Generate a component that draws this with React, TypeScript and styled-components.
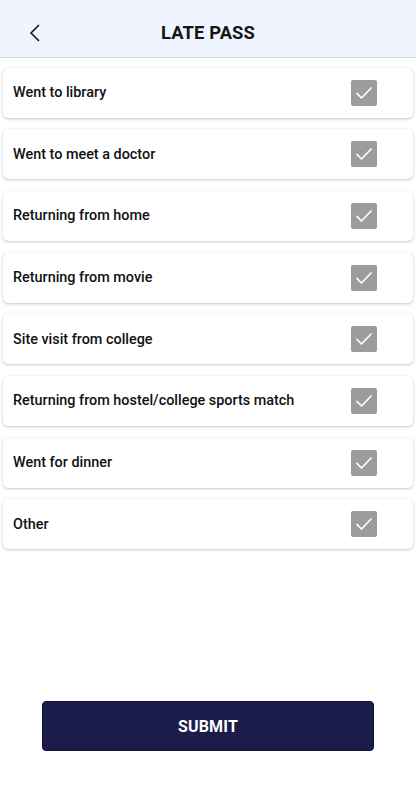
import React, { useState } from 'react';
import styled, { createGlobalStyle } from 'styled-components';

const GlobalStyle = createGlobalStyle`
  html, body {
    margin: 0;
    padding: 0;
    background: #ffffff;
  }
  body {
    font-family: Roboto, 'Liberation Sans', sans-serif;
    color: #111;
  }
`;

const Page = styled.div`
  display: flex;
  flex-direction: column;
  min-height: 800px;
  width: 416px;
  background: #fff;
`;

const Header = styled.header`
  height: 58px;
  box-sizing: border-box;
  padding-top: 7px;
  background-color: #eff4fe;
  border-bottom: 1px solid #d6d8dc;
  display: flex;
  align-items: center;
  position: relative;
  justify-content: center;
`;

const BackButton = styled.button`
  position: absolute;
  left: 24px;
  top: 21px;
  width: 24px;
  height: 24px;
  padding: 0;
  border: none;
  background: none;
  display: flex;
  align-items: center;
  justify-content: center;
`;

const Title = styled.h1`
  margin: 0;
  font-size: 18.4px;
  font-weight: 700;
  letter-spacing: 0.1px;
  color: #151515;
`;

const List = styled.div`
  display: flex;
  flex-direction: column;
  gap: 11.7px;
  padding: 9.5px 3px 0;
`;

const Card = styled.label`
  height: 50px;
  background: #fff;
  border-radius: 5px;
  box-shadow: 0 1px 3px rgba(0, 0, 0, 0.22), 0 0 1px rgba(0, 0, 0, 0.08);
  display: flex;
  align-items: center;
  justify-content: space-between;
  padding: 0 36px 0 10px;
  cursor: pointer;
`;

const Label = styled.span`
  font-size: 14.4px;
  font-weight: 500;
  color: #111;
`;

const Box = styled.span<{ $checked: boolean }>`
  width: 26px;
  height: 26px;
  border-radius: 2px;
  background: ${({ $checked }) => ($checked ? '#9c9c9c' : '#fff')};
  border: ${({ $checked }) => ($checked ? 'none' : '2px solid #9c9c9c')};
  box-sizing: border-box;
  display: flex;
  align-items: center;
  justify-content: center;
`;

const Spacer = styled.div`
  flex: 1;
`;

const SubmitButton = styled.button`
  align-self: center;
  width: 332px;
  height: 50px;
  margin: 0 0 49px 0;
  background-color: #1b1c4b;
  border: 1px solid #10112f;
  border-radius: 4px;
  color: #fff;
  font-family: Roboto, 'Liberation Sans', sans-serif;
  font-size: 16px;
  font-weight: 700;
  letter-spacing: 0.2px;
`;

const reasons = [
  'Went to library',
  'Went to meet a doctor',
  'Returning from home',
  'Returning from movie',
  'Site visit from college',
  'Returning from hostel/college sports match',
  'Went for dinner',
  'Other',
];

function Check() {
  return (
    <svg width="20" height="20" viewBox="0 0 24 24" fill="none">
      <path d="M3.5 12.5l5.5 5.5L20.5 6" stroke="#fff" strokeWidth="2" strokeLinecap="round" strokeLinejoin="round" />
    </svg>
  );
}

export default function App() {
  const [checked, setChecked] = useState<boolean[]>(reasons.map(() => true));

  const toggle = (i: number) =>
    setChecked((prev) => prev.map((v, j) => (j === i ? !v : v)));

  return (
    <Page>
      <GlobalStyle />
      <Header>
        <BackButton aria-label="Back">
          <svg width="20" height="20" viewBox="0 0 24 24" fill="none">
            <path d="M15 3L6 12l9 9" stroke="#151515" strokeWidth="2" strokeLinecap="round" strokeLinejoin="round" />
          </svg>
        </BackButton>
        <Title>LATE PASS</Title>
      </Header>
      <List>
        {reasons.map((r, i) => (
          <Card key={r} onClick={() => toggle(i)}>
            <Label>{r}</Label>
            <Box $checked={checked[i]}>{checked[i] && <Check />}</Box>
          </Card>
        ))}
      </List>
      <Spacer />
      <SubmitButton>SUBMIT</SubmitButton>
    </Page>
  );
}
